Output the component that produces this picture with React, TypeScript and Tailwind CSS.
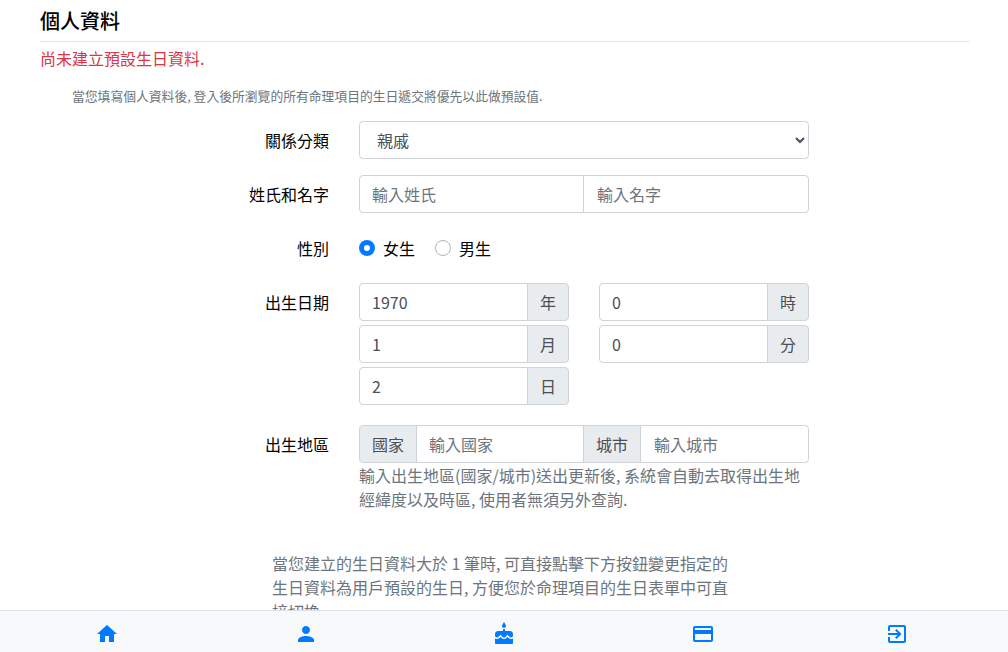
import { MdHome, MdPerson, MdCake, MdCreditCard, MdExitToApp } from "react-icons/md";

const inputClass =
  "h-[38px] min-w-0 border border-[#ced4da] bg-white px-3 text-base text-[#495057] outline-none placeholder:text-[#6c757d]";
const addonClass =
  "flex h-[38px] items-center border border-[#ced4da] bg-[#e9ecef] px-3 text-base text-[#495057]";

function FormRow({ label, className, children }: { label: string; className?: string; children: React.ReactNode }) {
  return (
    <div className={`flex ${className ?? ""}`}>
      <label className="h-[38px] w-[329px] shrink-0 text-right leading-[38px] text-black">{label}</label>
      <div className="ml-[30px] w-[450px]">{children}</div>
    </div>
  );
}

function UnitInput({ value, unit }: { value: string; unit: string }) {
  return (
    <div className="flex w-[210px]">
      <input
        readOnly
        value={value}
        className={`${inputClass} w-full flex-1 rounded-l-[4px]`}
      />
      <span className={`${addonClass} -ml-px rounded-r-[4px]`}>{unit}</span>
    </div>
  );
}

export default function App() {
  return (
    <div className="relative h-[652px] w-[1008px] overflow-hidden bg-white font-['Noto_Sans_CJK_TC',sans-serif] text-base text-[#212529]">
      <div className="px-10">
        <h5 className="h-[42px] w-[929px] border-b border-[#dee2e6] pt-[7px] text-[20px] leading-[27px] font-medium text-black">
          個人資料
        </h5>
        <p className="mt-[4px] leading-6 text-[#dc3545]">尚未建立預設生日資料.</p>
        <p className="mt-[17px] pl-[32px] text-[12.8px] leading-[18px] text-[#6c757d]">
          當您填寫個人資料後, 登入後所瀏覽的所有命理項目的生日遞交將優先以此做預設值.
        </p>
      </div>

      <div className="mt-[16px] flex flex-col">
        <FormRow label="關係分類" className="mb-4">
          <select className="h-[38px] w-full rounded-[4px] border border-[#ced4da] bg-white pr-3 pl-[13px] text-base text-[#495057] outline-none">
            <option>親戚</option>
          </select>
        </FormRow>
        <FormRow label="姓氏和名字" className="mb-4">
          <div className="flex">
            <input placeholder="輸入姓氏" className={`${inputClass} w-[225px] rounded-l-[4px]`} />
            <input placeholder="輸入名字" className={`${inputClass} -ml-px w-0 flex-1 rounded-r-[4px] pl-[13px]`} />
          </div>
        </FormRow>
        <FormRow label="性別" className="mb-4">
          <div className="flex h-[38px] items-center text-black">
            <span className="h-4 w-4 rounded-full border-[5px] border-[#007bff] bg-white" />
            <span className="ml-2">女生</span>
            <span className="ml-5 h-4 w-4 rounded-full border border-[#adb5bd] bg-white" />
            <span className="ml-2">男生</span>
          </div>
        </FormRow>
        <FormRow label="出生日期" className="mb-5">
          <div className="flex justify-between">
            <div className="flex flex-col gap-1">
              <UnitInput value="1970" unit="年" />
              <UnitInput value="1" unit="月" />
              <UnitInput value="2" unit="日" />
            </div>
            <div className="flex flex-col gap-1">
              <UnitInput value="0" unit="時" />
              <UnitInput value="0" unit="分" />
            </div>
          </div>
        </FormRow>
        <FormRow label="出生地區">
          <div className="flex">
            <span className={`${addonClass} rounded-l-[4px]`}>國家</span>
            <input placeholder="輸入國家" className={`${inputClass} -ml-px w-[168px]`} />
            <span className={`${addonClass} -ml-px`}>城市</span>
            <input placeholder="輸入城市" className={`${inputClass} -ml-px w-0 flex-1 rounded-r-[4px] pl-[13px]`} />
          </div>
          <p className="leading-6 text-[#6c757d]">
            輸入出生地區(國家/城市)送出更新後, 系統會自動去取得出生地經緯度以及時區, 使用者無須另外查詢.
          </p>
        </FormRow>
      </div>

      <p className="mt-[40px] ml-[272px] w-[460px] leading-6 text-[#6c757d]">
        當您建立的生日資料大於 1 筆時, 可直接點擊下方按鈕變更指定的生日資料為用戶預設的生日, 方便您於命理項目的生日表單中可直接切換.
      </p>

      <nav className="absolute right-0 bottom-0 left-0 flex h-[42px] gap-[175px] border-t border-[#dee2e6] bg-[#f8f9fa] pt-[11px] pl-[95px] text-[#007bff]">
        <MdHome size={24} />
        <MdPerson size={24} />
        <MdCake className="-ml-px" size={24} />
        <MdCreditCard size={24} />
        <MdExitToApp className="-ml-[5px]" size={24} />
      </nav>
    </div>
  );
}
